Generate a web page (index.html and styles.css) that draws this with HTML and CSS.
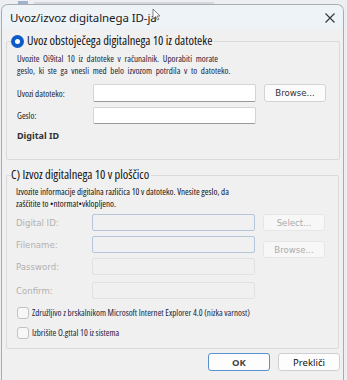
FILE: index.html
```html
<!DOCTYPE html>
<html>
<head>
<meta charset="utf-8">
<link rel="stylesheet" href="styles.css">
</head>
<body>
<div class="behind"><span class="bicon"></span><span class="btext"></span></div>
<div class="window">
  <div class="titlebar">
    <span class="title">Uvoz/izvoz digitalnega ID-ja</span>
    <svg class="cursor" width="9" height="13" viewBox="0 0 9 13"><path d="M1 1 L1 11 L3.5 8.5 L5.5 12 L7 11.3 L5 8 L8 8 Z" fill="#fff" stroke="#666" stroke-width="0.8"/></svg>
    <svg class="close" width="12" height="12" viewBox="0 0 12 12"><path d="M1.5 1.5 L10.5 10.5 M10.5 1.5 L1.5 10.5" stroke="#333" stroke-width="1.1"/></svg>
  </div>
  <div class="content">
    <fieldset class="group g1">
      <legend class="legend"><span class="radio"></span><span class="cond">Uvoz obstoječega digitalnega 10 iz datoteke</span></legend>
      <p class="desc1 cond">Uvozite Oi9ital 10 iz datoteke v računalnik. Uporabiti morate<br>geslo, ki ste ga vnesli med belo izvozom potrdila v to datoteko.</p>
      <div class="row r1">
        <span class="lbl cond">Uvozi datoteko:</span>
        <span class="input"></span>
        <span class="btn">Browse...</span>
      </div>
      <div class="row r2">
        <span class="lbl cond">Geslo:</span>
        <span class="input"></span>
      </div>
      <div class="did">Digital ID</div>
    </fieldset>
    <fieldset class="group g2">
      <legend class="legend2 cond">C) Izvoz digitalnega 10 v ploščico</legend>
      <p class="desc2 cond">Izvozite informacije digitalna različica 10 v datoteko. Vnesite geslo, da<br>zaščitite to •ntormat•vklopljeno.</p>
      <div class="row d1">
        <span class="lbl dis">Digital ID:</span>
        <span class="input off blue"></span>
        <span class="btn offbtn">Select...</span>
      </div>
      <div class="row d2">
        <span class="lbl dis">Filename:</span>
        <span class="input off blue"></span>
        <span class="btn offbtn low">Browse...</span>
      </div>
      <div class="row d3">
        <span class="lbl dis">Password:</span>
        <span class="input off"></span>
      </div>
      <div class="row d4">
        <span class="lbl dis">Confirm:</span>
        <span class="input off"></span>
      </div>
      <label class="check c1"><span class="box"></span><span class="cond">Združljivo z brskalnikom Microsoft Internet Explorer 4.0 (nizka varnost)</span></label>
      <label class="check c2"><span class="box"></span><span class="cond">Izbrišite O.gttal 10 iz sistema</span></label>
    </fieldset>
    <div class="actions">
      <span class="abtn ok">OK</span>
      <span class="abtn">Prekliči</span>
    </div>
  </div>
</div>
</body>
</html>
```
FILE: styles.css
```css
* { box-sizing: border-box; }
html, body { margin: 0; padding: 0; }
body {
  width: 347px;
  height: 380px;
  overflow: hidden;
  background: #eceef1;
  font-family: "Noto Sans", "Open Sans", sans-serif;
  color: #1a1a1a;
}
.behind {
  height: 4px;
  display: flex;
  align-items: flex-end;
  gap: 6px;
  padding-left: 18px;
}
.bicon { width: 10px; height: 3px; background: #9fb4cc; }
.btext { width: 180px; height: 2px; background: #d4d7dc; }
.window {
  margin-left: 1px;
  width: 343px;
  height: 376px;
  border: 1px solid #a9abae;
  border-bottom: none;
  border-radius: 7px 7px 0 0;
  background: #f0f0f0;
  overflow: hidden;
}
.titlebar {
  height: 24px;
  background: #eef3f8;
  display: flex;
  align-items: center;
  padding-left: 8px;
  position: relative;
}
.title { font-size: 11.5px; color: #1a1a1a; letter-spacing: -0.1px; }
.cursor { position: absolute; left: 150px; top: 3px; }
.close { position: absolute; right: 7px; top: 7px; }
.content { padding: 4px 0 0 4px; }
.cond { font-family: "Open Sans", sans-serif; font-stretch: 75%; }
fieldset { margin: 0; min-width: 0; }
.group {
  border: 1px solid #dadada;
  padding: 0 0 0 10px;
  border-radius: 2px;
}
.g1 { height: 127px; width: 334px; }
.legend {
  padding: 0 2px 0 0;
  margin-left: -6px;
  font-size: 12.5px;
  line-height: 16px;
  display: flex;
  align-items: center;
  color: #111;
}
.radio {
  width: 13px;
  height: 13px;
  border-radius: 50%;
  background: #0b5cc8;
  margin-right: 3px;
  display: inline-flex;
  align-items: center;
  justify-content: center;
}
.radio::after {
  content: "";
  width: 5px; height: 5px; border-radius: 50%; background: #fff;
}
.desc1 {
  margin: 4px 0 0 0;
  font-size: 9px;
  line-height: 12px;
  word-spacing: 2px;
  color: #1c1c3c;
}
.row { display: flex; align-items: center; }
.lbl { width: 76px; font-size: 9px; color: #222; }
.input {
  width: 163px;
  height: 18px;
  background: #fff;
  border: 1px solid #d4d4d4;
  border-bottom-color: #9a9a9a;
  border-radius: 2px;
}
.btn {
  margin-left: 8px;
  width: 62px;
  height: 18px;
  border: 1px solid #d3d3d3;
  border-radius: 3px;
  background: #fbfbfb;
  font-family: "DejaVu Sans", sans-serif;
  font-size: 8.6px;
  color: #333;
  display: flex;
  align-items: center;
  justify-content: center;
}
.r1 { margin-top: 7px; }
.r2 { margin-top: 5px; }
.r2 .input { height: 17px; }
.did {
  margin-top: 5px;
  font-size: 9px;
  font-weight: bold;
  color: #333;
}
.g2 { margin-top: 7px; height: 182px; width: 333px; padding-left: 9px; }
.legend2 {
  padding: 0 2px 0 0;
  margin-left: -5px;
  font-size: 12.5px;
  line-height: 16px;
  color: #111;
}
.desc2 {
  margin: 3px 0 0 0;
  font-size: 9px;
  line-height: 12px;
  color: #111;
}
.dis { font-family: "DejaVu Sans", sans-serif; font-size: 8.6px; color: #b0b0b0; }
.input.off { background: #f0f0f0; border: 1px solid #e1e1e1; height: 17px; }
.input.blue { border: 1px solid #b6c6da; }
.offbtn { color: #aaa; border-color: #e6e6e6; background: #f7f7f7; height: 17px; }
.offbtn.low { align-self: flex-start; margin-top: 5px; margin-bottom: -5px; }
.d1 { margin-top: 4px; }
.d2 { margin-top: 5px; }
.d3 { margin-top: 5px; }
.d4 { margin-top: 7px; }
.check {
  display: flex;
  align-items: center;
  font-size: 9px;
  line-height: 12px;
  color: #1c1c3c;
}
.c1 { margin-top: 8px; }
.c2 { margin-top: 8px; }
.box {
  width: 12px; height: 12px;
  border: 1px solid #c2c2c2;
  border-radius: 3px;
  background: #f7f7f7;
  margin-right: 3px;
  margin-left: 1px;
}
.actions {
  display: flex;
  justify-content: flex-end;
  gap: 8px;
  padding: 4px 3px 0 0;
}
.abtn {
  width: 62px;
  height: 18px;
  border: 1px solid #cfcfcf;
  border-radius: 3px;
  background: #fdfdfd;
  font-size: 9.5px;
  display: flex;
  align-items: center;
  justify-content: center;
  color: #111;
}
.abtn.ok { border: 1px solid #5a8fd0; font-weight: bold; color: #444; }
```
